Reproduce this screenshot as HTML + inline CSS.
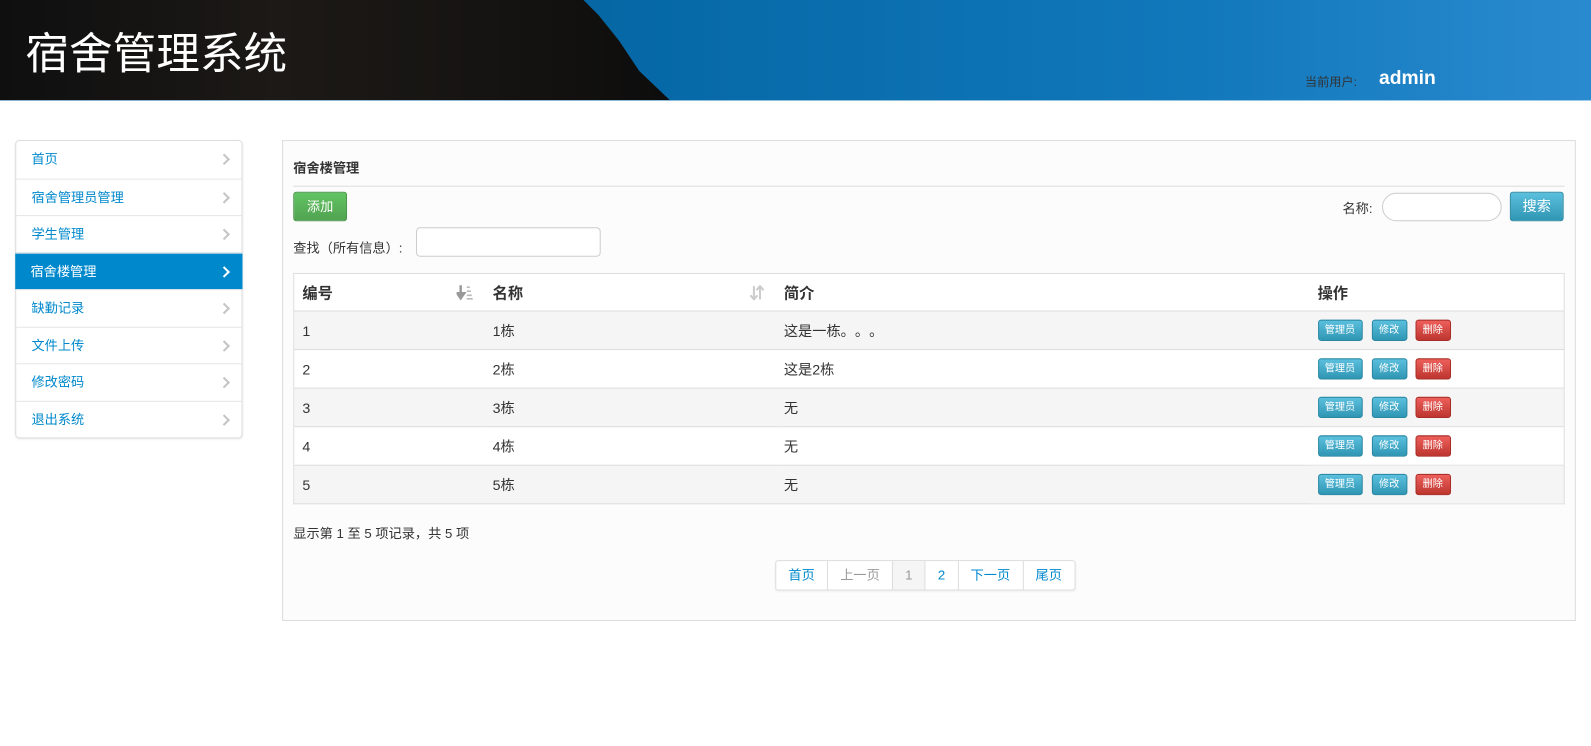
<!DOCTYPE html>
<html><head><meta charset="utf-8"><style>
*{box-sizing:border-box;margin:0;padding:0}
html,body{width:1591px;height:746px;overflow:hidden;background:#fff}
#w{width:1568px;height:736px;position:relative;transform:scale(1.0147);transform-origin:0 0;font-family:"Liberation Sans","Noto Sans CJK SC",sans-serif;font-size:13px;color:#333}
.hdr{position:absolute;left:0;top:0;width:1568px;height:98.5px;background:linear-gradient(90deg,#05578f 0%,#0668a6 40%,#1178bb 75%,#2a8ad0 100%)}
.rock{position:absolute;left:0;top:0;width:680px;height:98.5px;background:linear-gradient(90deg,#0f0f10,#1c1916 40%,#161412 70%,#0c0c0c);clip-path:polygon(0 0,575px 0,590px 15px,610px 40px,630px 70px,660px 98.5px,0 98.5px)}
.title{position:absolute;left:25px;top:24px;font-size:43px;color:#fff;font-family:"Noto Sans CJK SC",sans-serif;line-height:52px}
.user{position:absolute;left:1286px;top:72px;font-size:12px;color:#333}
.admin{position:absolute;left:1359px;top:67px;font-size:19px;color:#fff;font-weight:bold}
.side{position:absolute;left:15px;top:138px;width:224px;border:1px solid #ddd;border-radius:4px;background:#fff;box-shadow:0 1px 2px rgba(0,0,0,.08)}
.side div{height:36.5px;line-height:36px;padding-left:15px;color:#0088cc;border-top:1px solid #e5e5e5;position:relative}
.side div:first-child{border-top:none}
.side div:after{content:"";position:absolute;right:13px;top:14px;width:6px;height:6px;border-right:2px solid #c4c4c4;border-top:2px solid #c4c4c4;transform:rotate(45deg)}
.side div.act{background:#0088cc;color:#fff;margin:0 -1px}
.side div.act:after{border-color:#fff;right:14px}
.panel{position:absolute;left:278px;top:138px;width:1275px;height:474px;border:1px solid #ddd;background:#fcfcfc}
.abs{position:absolute}
.btn{position:absolute;color:#fff;text-align:center;border-radius:3px}
.green{background:linear-gradient(#62c462,#51a351);border:1px solid #4a944a}
.blue{background:linear-gradient(#5bc0de,#2f96b4);border:1px solid #2a87a2}
.red{background:linear-gradient(#ee5f5b,#bd362f);border:1px solid #a82f29}
.sm{font-size:10px;height:21px;line-height:19px}
table{position:absolute;left:10px;top:130px;width:1253px;border-collapse:collapse;border:1px solid #ddd;background:#fff;font-size:14px}
td,th{height:38px;padding-left:8px;text-align:left;border-top:1px solid #ddd}
th{font-size:15px;height:37px;font-weight:bold}
tr.o td{background:#f5f5f5}
.pg{position:absolute;left:485px;top:413px;display:flex;border:1px solid #ddd;border-radius:3px;background:#fff;box-shadow:0 1px 2px rgba(0,0,0,.05)}
.pg span{height:28px;line-height:28px;padding:0 12px;color:#0088cc;border-left:1px solid #ddd}
.pg span:first-child{border-left:none}
.dot{display:inline-block;width:14px}
</style></head><body><div id="w">
<div class="hdr"><div class="rock"></div></div>
<div class="title">宿舍管理系统</div>
<div class="user">当前用户:</div>
<div class="admin">admin</div>
<div class="side">
<div>首页</div><div>宿舍管理员管理</div><div>学生管理</div><div class="act">宿舍楼管理</div><div>缺勤记录</div><div>文件上传</div><div>修改密码</div><div>退出系统</div>
</div>
<div class="panel">
<div class="abs" style="left:10px;top:16px;font-weight:bold;font-size:13px">宿舍楼管理</div>
<div class="abs" style="left:10px;top:44px;width:1253px;border-top:1px solid #ddd"></div>
<div class="btn green" style="left:10px;top:50px;width:53px;height:29px;line-height:27px">添加</div>
<div class="abs" style="left:1044px;top:56px">名称:</div>
<div class="abs" style="left:1083px;top:51px;width:118px;height:28px;border:1px solid #ccc;border-radius:14px;background:#fff"></div>
<div class="btn blue" style="left:1209px;top:50px;width:53px;height:29px;line-height:27px;font-size:14px">搜索</div>
<div class="abs" style="left:10px;top:95px">查找（所有信息）:</div>
<div class="abs" style="left:131px;top:85px;width:182px;height:29px;border:1px solid #ccc;border-radius:4px;background:#fff"></div>
<table>
<tr><th style="width:188px;border-top:none;position:relative">编号<svg style="position:absolute;right:12px;top:11px" width="16" height="15" viewBox="0 0 16 15"><path d="M4 0v11M0.5 8l3.5 5 3.5-5z" stroke="#999" stroke-width="2.4" fill="#999"/><path d="M10 2h3M10 6h4M10 10h5M10 13.5h6" stroke="#bbb" stroke-width="1.6"/></svg></th><th style="width:287px;border-top:none;position:relative">名称<svg style="position:absolute;right:12px;top:11px" width="14" height="15" viewBox="0 0 14 15"><path d="M4 1v13M0.5 10l3.5 4 3.5-4M10 14V1M6.5 5l3.5-4 3.5 4" stroke="#ccc" stroke-width="2" fill="none"/></svg></th><th style="width:526px;border-top:none">简介</th><th style="border-top:none">操作</th></tr>
<tr class="o"><td>1</td><td>1栋</td><td>这是一栋<span class="dot">。</span><span class="dot">。</span><span class="dot">。</span></td><td style="position:relative"><div class="btn blue sm" style="left:8px;top:8px;width:44px">管理员</div><div class="btn blue sm" style="left:61px;top:8px;width:35px">修改</div><div class="btn red sm" style="left:104px;top:8px;width:35px">删除</div></td></tr>
<tr><td>2</td><td>2栋</td><td>这是2栋</td><td style="position:relative"><div class="btn blue sm" style="left:8px;top:8px;width:44px">管理员</div><div class="btn blue sm" style="left:61px;top:8px;width:35px">修改</div><div class="btn red sm" style="left:104px;top:8px;width:35px">删除</div></td></tr>
<tr class="o"><td>3</td><td>3栋</td><td>无</td><td style="position:relative"><div class="btn blue sm" style="left:8px;top:8px;width:44px">管理员</div><div class="btn blue sm" style="left:61px;top:8px;width:35px">修改</div><div class="btn red sm" style="left:104px;top:8px;width:35px">删除</div></td></tr>
<tr><td>4</td><td>4栋</td><td>无</td><td style="position:relative"><div class="btn blue sm" style="left:8px;top:8px;width:44px">管理员</div><div class="btn blue sm" style="left:61px;top:8px;width:35px">修改</div><div class="btn red sm" style="left:104px;top:8px;width:35px">删除</div></td></tr>
<tr class="o"><td>5</td><td>5栋</td><td>无</td><td style="position:relative"><div class="btn blue sm" style="left:8px;top:8px;width:44px">管理员</div><div class="btn blue sm" style="left:61px;top:8px;width:35px">修改</div><div class="btn red sm" style="left:104px;top:8px;width:35px">删除</div></td></tr>
</table>
<div class="abs" style="left:10px;top:376px">显示第 1 至 5 项记录，共 5 项</div>
<div class="pg"><span>首页</span><span style="color:#999">上一页</span><span style="color:#999;background:#f5f5f5">1</span><span>2</span><span>下一页</span><span>尾页</span></div>
</div>
</div></body></html>
